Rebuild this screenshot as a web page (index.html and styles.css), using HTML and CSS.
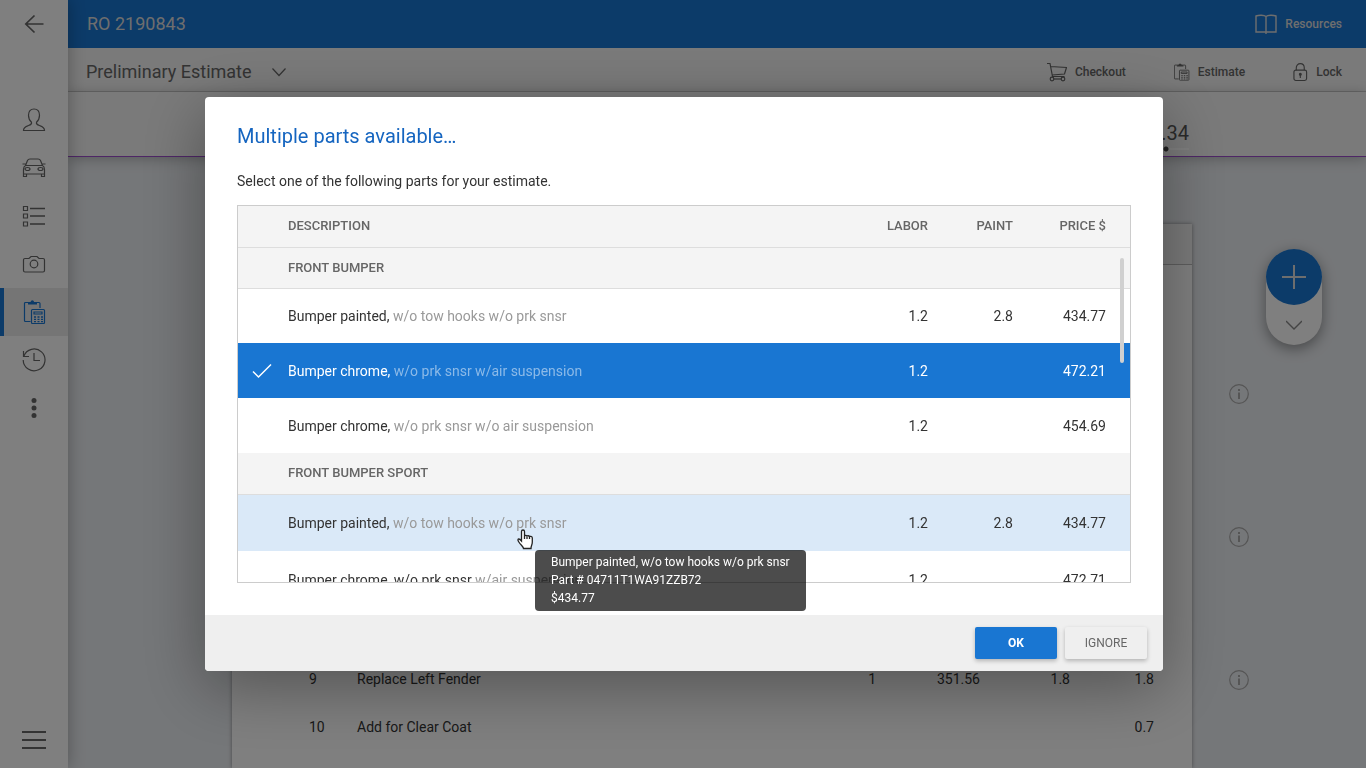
FILE: index.html
```html
<!DOCTYPE html>
<html lang="en">
  <head>
    <meta charset="UTF-8" />
    <meta name="viewport" content="width=device-width, initial-scale=1.0" />
    <title>RO 2190843</title>
    <link rel="stylesheet" href="styles.css">
  </head>
  <body>
    <!-- Shared icons -->
    <svg class="icon-defs" width="0" height="0" aria-hidden="true">
      <symbol id="icon-estimate" viewBox="0 0 24 24">
        <path d="M8.500 21.500H3.500a1 1 0 0 1-1-1V3.500a1 1 0 0 1 1-1H17a1 1 0 0 1 1 1V8" />
        <path d="M6 4.500V3l2.500-.8C8.700 1 9.500.2 10.300.2s1.700.8 1.900 2L15 3v1.500z" fill="currentColor" stroke="none" />
        <rect x="9.500" y="9.500" width="13" height="14" rx="1" />
        <path d="M12 12h8v2h-8z" />
        <path d="M12 17h2m1.500 0h2m1.500 0h2M12 19.300h2m1.500 0h2m1.500 0h2M12 21.600h2m1.500 0h2m1.500 0h2" stroke-width="1.300" />
      </symbol>
      <symbol id="icon-info" viewBox="0 0 20 20">
        <circle cx="10" cy="10" r="9.300" />
        <path d="M10 8.500V15M10 5v2" stroke-width="2" />
      </symbol>
    </svg>

    <div class="app">
      <nav class="sidebar">
        <button class="nav-item nav-back" aria-label="Back">
          <svg class="icon" viewBox="0 0 24 24"><path d="M21.500 12H4M12.500 3.500 3.800 12l8.700 8.500" stroke-width="1.700" /></svg>
        </button>
        <a class="nav-item" href="#" aria-label="Customer">
          <svg class="icon" viewBox="0 0 24 24"><path d="M1.500 22.500c0-3.500 2.500-4 5-5 2.500-.8 3.500-1.500 3-3.200C7.500 12.500 6.500 10 6.500 7.300c0-4 2-6.300 5.500-6.300s5.500 2.300 5.500 6.300c0 2.700-1 5.200-3 7-.5 1.700.5 2.400 3 3.200 2.500 1 5 1.500 5 5z" /></svg>
        </a>
        <a class="nav-item" href="#" aria-label="Vehicle">
          <svg class="icon" viewBox="0 0 24 24">
            <path d="M3.500 9.500 5.500 4.500C6 3.300 7 3 8 3h8c1 0 2 .3 2.500 1.500l2 5M3.500 9.500h17M3.500 9.500c-1.800 1-2 2-2 4V20.500h3V18h15v2.500h3v-7c0-2-.2-3-2-4M1.500 18h21M3.500 8H.5M20.500 8h3" />
            <ellipse cx="5.500" cy="13" rx="2.500" ry="1.500" /><ellipse cx="18.500" cy="13" rx="2.500" ry="1.500" />
          </svg>
        </a>
        <a class="nav-item" href="#" aria-label="List">
          <svg class="icon" viewBox="0 0 24 24"><path d="M1.500 2.500h4v4h-4zM1.500 10h4v4h-4zM1.500 18h4v4h-4z" /><path d="M8 4.500h15M8 12h15M8 20h15" stroke-width="1.700" /></svg>
        </a>
        <a class="nav-item" href="#" aria-label="Photos">
          <svg class="icon" viewBox="0 0 24 24"><path d="M3 6.500h4L9 4.500h6l2 2h4a1.500 1.500 0 0 1 1.500 1.500v10.500a1.500 1.500 0 0 1-1.500 1.500H3a1.500 1.500 0 0 1-1.500-1.500V8A1.500 1.500 0 0 1 3 6.500z" /><circle cx="12" cy="12" r="3.800" /></svg>
        </a>
        <a class="nav-item active" href="#" aria-label="Estimate">
          <svg class="icon"><use href="#icon-estimate" /></svg>
        </a>
        <a class="nav-item" href="#" aria-label="History">
          <svg class="icon" viewBox="0 0 24 24"><path d="M1.500 3v5.500H7M1.800 8.300A10.900 10.900 0 1 1 1.200 12M12 5v7.500h6" /></svg>
        </a>
        <button class="nav-item" aria-label="More">
          <svg class="icon" viewBox="0 0 24 24"><g fill="currentColor" stroke="none"><circle cx="12" cy="4.500" r="2.500" /><circle cx="12" cy="12" r="2.500" /><circle cx="12" cy="19.500" r="2.500" /></g></svg>
        </button>
        <button class="nav-item nav-menu" aria-label="Menu">
          <svg class="icon" viewBox="0 0 24 24"><path d="M0 4h24M0 12h24M0 20h24" stroke-width="1.900" /></svg>
        </button>
      </nav>

      <div class="main">
        <header class="topbar">
          <h1>RO 2190843</h1>
          <a class="tool" href="#">
            <svg class="icon icon-book" viewBox="0 0 22 20"><path d="M11 18.500V2.500C9 1 4 1 1 2v16h20V2C18 1 13 1 11 2.500M11 18v2" stroke-width="1.400" /></svg>
            Resources
          </a>
        </header>

        <div class="toolbar">
          <div class="estimate-picker">
            <select aria-label="Estimate version">
              <option>Preliminary Estimate</option>
            </select>
            <svg class="icon picker-arrow" viewBox="0 0 16 16"><path d="m1.500 4.500 6.500 7 6.500-7" /></svg>
          </div>
          <div class="tools">
            <button class="tool">
              <svg class="icon icon-small" viewBox="0 0 20 20"><path d="M0 1.500h3l2.500 13h12M3.500 4.500l16 1-2 6.500-12.500 1" /><circle cx="5" cy="17" r="1.800" /><circle cx="16" cy="17" r="1.800" /><path d="M7 17h7" /></svg>
              Checkout
            </button>
            <button class="tool">
              <svg class="icon icon-estimate" viewBox="2 0 22 24"><use href="#icon-estimate" width="24" height="24" /></svg>
              Estimate
            </button>
            <button class="tool">
              <svg class="icon icon-lock" viewBox="0 0 16 20"><rect x="1" y="8" width="13.500" height="11" rx="2" /><path d="M3.500 8V5.500C3.500 3 5.200 1 7.800 1S12 3 12 5.500V8M7.800 13v3.500" /><circle cx="7.800" cy="12.500" r="1" fill="currentColor" /></svg>
              Lock
            </button>
          </div>
        </div>

        <div class="summary">
          <div class="total">
            <span>.34</span>
            <div class="total-track"></div>
          </div>
        </div>

        <div class="content">
          <section class="lines-card">
            <div class="lines-header"></div>
            <table class="lines">
              <tr>
                <td class="line-number">9</td>
                <td>Replace Left Fender</td>
                <td class="line-qty">1</td>
                <td class="line-price">351.56</td>
                <td class="line-labor">1.8</td>
                <td class="line-paint">1.8</td>
              </tr>
              <tr>
                <td class="line-number">10</td>
                <td>Add for Clear Coat</td>
                <td class="line-qty"></td>
                <td class="line-price"></td>
                <td class="line-labor"></td>
                <td class="line-paint">0.7</td>
              </tr>
            </table>
          </section>
          <aside class="gutter">
            <div class="info-list">
              <button class="info" aria-label="Info"><svg class="icon"><use href="#icon-info" /></svg></button>
              <button class="info" aria-label="Info"><svg class="icon"><use href="#icon-info" /></svg></button>
              <button class="info" aria-label="Info"><svg class="icon"><use href="#icon-info" /></svg></button>
            </div>
            <div class="fab">
              <button class="fab-add" aria-label="Add"><svg class="icon" viewBox="0 0 24 24"><path d="M12 0v24M0 12h24" stroke-width="2" /></svg></button>
              <button class="fab-more" aria-label="More actions"><svg class="icon" viewBox="0 0 16 16"><path d="m0 4 8 8 8-8" stroke-width="1.400" /></svg></button>
            </div>
          </aside>
        </div>
      </div>
    </div>

    <div class="overlay">
      <div class="dialog" role="dialog" aria-modal="true" aria-labelledby="dialog-title">
        <div class="dialog-body">
          <h2 id="dialog-title">Multiple parts available…</h2>
          <p>Select one of the following parts for your estimate.</p>
          <div class="parts-box">
            <table class="parts">
              <thead>
                <tr>
                  <th class="col-check"></th>
                  <th>DESCRIPTION</th>
                  <th class="col-num">LABOR</th>
                  <th class="col-num">PAINT</th>
                  <th class="col-price">PRICE $</th>
                </tr>
              </thead>
              <tbody>
                <tr class="group">
                  <th></th>
                  <th colspan="4">FRONT BUMPER</th>
                </tr>
                <tr>
                  <td></td>
                  <td>Bumper painted, <span class="detail">w/o tow hooks w/o prk snsr</span></td>
                  <td class="col-num">1.2</td>
                  <td class="col-num">2.8</td>
                  <td class="col-price">434.77</td>
                </tr>
                <tr class="selected" aria-selected="true">
                  <td class="col-check"><svg class="icon" viewBox="0 0 20 16"><path d="m1 8.500 5.500 5.500L19 1.500" stroke-width="1.500" /></svg></td>
                  <td>Bumper chrome, <span class="detail">w/o prk snsr w/air suspension</span></td>
                  <td class="col-num">1.2</td>
                  <td class="col-num"></td>
                  <td class="col-price">472.21</td>
                </tr>
                <tr>
                  <td></td>
                  <td>Bumper chrome, <span class="detail">w/o prk snsr w/o air suspension</span></td>
                  <td class="col-num">1.2</td>
                  <td class="col-num"></td>
                  <td class="col-price">454.69</td>
                </tr>
              </tbody>
              <tbody class="sport">
                <tr class="group">
                  <th></th>
                  <th colspan="4">FRONT BUMPER SPORT</th>
                </tr>
                <tr class="hovered">
                  <td></td>
                  <td>Bumper painted, <span class="detail">w/o tow hooks w/o prk snsr</span></td>
                  <td class="col-num">1.2</td>
                  <td class="col-num">2.8</td>
                  <td class="col-price">434.77</td>
                </tr>
                <tr>
                  <td></td>
                  <td>Bumper chrome, w/o prk snsr <span class="detail">w/air suspension</span></td>
                  <td class="col-num">1.2</td>
                  <td class="col-num"></td>
                  <td class="col-price">472.71</td>
                </tr>
              </tbody>
            </table>
            <div class="scroll-thumb"></div>
          </div>
        </div>
        <div class="dialog-footer">
          <button class="btn btn-primary">OK</button>
          <button class="btn">IGNORE</button>
        </div>
        <svg class="pointer" viewBox="0 0 18 21"><path d="M5.500 12V2.500a1.500 1.500 0 0 1 3 0V7c0-1 2.500-1 2.500.5 0-1.200 2.500-1 2.500.5 0-1 2.800-.8 2.800 1v4c0 3-1.300 3.500-1.300 6.500H7.500c0-2-3-3.500-5-7-1-1.800-.5-2.500.3-2.500 1 0 1.700.8 2.700 2z" /><path d="M8.500 7v3M11 7.500V10M13.500 8v2" /></svg>
        <div class="tooltip" role="tooltip">
          Bumper painted, w/o tow hooks w/o prk snsr<br />
          Part # 04711T1WA91ZZB72<br />
          $434.77
        </div>
      </div>
    </div>
  </body>
</html>
```

FILE: styles.css
```css
* {
  box-sizing: border-box;
}
body {
  margin: 0;
  font-family: Roboto, "Liberation Sans", sans-serif;
  font-size: 14px;
  line-height: 20px;
  color: #333;
}
h1,
h2,
p {
  margin: 0;
  font-weight: 400;
}
button {
  border: none;
  padding: 0;
  background: none;
  font: inherit;
  color: inherit;
  cursor: pointer;
}
a {
  color: inherit;
  text-decoration: none;
}
table {
  width: 100%;
  border-collapse: collapse;
  table-layout: fixed;
}
.icon-defs {
  position: absolute;
}
.icon {
  display: block;
  width: 24px;
  height: 24px;
  fill: none;
  stroke: currentColor;
  stroke-width: 1.2;
}

/* App shell */
.app {
  display: flex;
  height: 100vh;
  overflow: hidden;
}
.sidebar {
  display: flex;
  flex-direction: column;
  width: 68px;
  background: white;
  color: #666;
  box-shadow: 0 0 16px rgba(0, 0, 0, 0.3);
  z-index: 1;
}
.nav-item {
  display: flex;
  align-items: center;
  justify-content: center;
  height: 48px;
  border-left: 4px solid transparent;
  border-right: 4px solid transparent;
}
.nav-back {
  margin-bottom: 48px;
}
.nav-item.active {
  border-left-color: #1976d2;
  border-right-color: #ebebeb;
  background: #ebebeb;
  color: #1976d2;
}
.nav-item.nav-menu {
  margin-top: auto;
  height: 56px;
  border-width: 1px 0 0;
  border-top-color: #bbb;
}
.main {
  display: flex;
  flex-direction: column;
  flex: 1;
  min-width: 0;
}
.topbar {
  display: flex;
  align-items: center;
  justify-content: space-between;
  height: 48px;
  padding: 0 24px 0 19px;
  background: #1976d2;
  color: #ddd;
}
.topbar h1 {
  font-size: 18px;
  line-height: 24px;
}
.toolbar {
  display: flex;
  align-items: center;
  justify-content: space-between;
  height: 44px;
  padding: 5px 24px 0 18px;
  border-bottom: 1px solid #ccc;
  background: #f4f4f4;
  color: #666;
}
.estimate-picker {
  display: flex;
  align-items: center;
}
.estimate-picker select {
  appearance: none;
  width: 185px;
  padding: 0;
  border: none;
  background: none;
  font: inherit;
  font-size: 18px;
  line-height: 24px;
  color: inherit;
}
.picker-arrow {
  width: 16px;
  height: 16px;
}
.tools {
  display: flex;
  gap: 48px;
}
.tool {
  display: flex;
  align-items: center;
  gap: 8px;
  font-size: 12px;
  font-weight: 500;
}
.icon-small {
  width: 20px;
  height: 20px;
}
.icon-book {
  width: 22px;
  height: 20px;
}
.icon-estimate {
  width: 16px;
  height: 18px;
}
.icon-lock {
  width: 15px;
  height: 20px;
}
.summary {
  display: flex;
  justify-content: flex-end;
  height: 65px;
  padding: 29px 177px 0 0;
  border-bottom: 1px solid #9c4dcc;
  background: #f4f4f4;
  box-shadow: 0 2px 12px rgba(0, 0, 0, 0.25);
  color: #555;
  z-index: 0;
}
.total {
  width: 32px;
  font-size: 20px;
  line-height: 24px;
  text-align: right;
}
.total-track {
  height: 6px;
  margin-top: 1px;
  background: radial-gradient(circle at 9px 3px, #444 2px, transparent 3px),
    linear-gradient(transparent 2px, #fff 2px, #fff 4px, transparent 4px);
}

/* Estimate lines */
.content {
  display: flex;
  flex: 1;
  min-height: 0;
  padding-left: 164px;
  background: #ebeef2;
}
.lines-card {
  display: flex;
  flex-direction: column;
  flex: 1;
  margin-top: 67px;
  padding-bottom: 17px;
  background: white;
  box-shadow: 0 0 4px rgba(0, 0, 0, 0.4);
}
.lines-header {
  height: 41px;
  border-bottom: 1px solid #bbb;
  background: #f4f4f4;
}
.lines {
  margin-top: auto;
}
.lines td {
  height: 48px;
  padding: 0;
}
.lines .line-number {
  width: 125px;
  padding-left: 77px;
}
.lines .line-qty,
.lines .line-price,
.lines .line-labor,
.lines .line-paint {
  width: 90px;
  text-align: right;
}
.lines .line-price {
  width: 104px;
}
.lines .line-paint {
  width: 122px;
  padding-right: 38px;
}
.gutter {
  display: flex;
  align-items: flex-start;
  gap: 17px;
  width: 174px;
  padding-left: 37px;
}
.info-list {
  display: flex;
  flex-direction: column;
  gap: 123px;
  padding-top: 227px;
  color: #aaa;
}
.info .icon {
  width: 20px;
  height: 20px;
}
.fab {
  width: 56px;
  margin-top: 92px;
  border-radius: 28px;
  background: white;
  box-shadow: 0 4px 14px rgba(0, 0, 0, 0.4);
  color: #888;
}
.fab-add,
.fab-more {
  display: flex;
  align-items: center;
  justify-content: center;
  width: 56px;
  height: 40px;
}
.fab-add {
  height: 56px;
  border-radius: 50%;
  background: #1976d2;
  color: #ddd;
}
.fab-more .icon {
  width: 16px;
  height: 16px;
}

/* Parts dialog */
.overlay {
  position: fixed;
  inset: 0;
  display: flex;
  align-items: center;
  padding: 0 203px 0 205px;
  background: rgba(0, 0, 0, 0.5);
  z-index: 10;
}
.dialog {
  position: relative;
  flex: 1;
  border-radius: 4px;
  background: white;
  box-shadow: 0 16px 64px rgba(0, 0, 0, 0.35);
}
.dialog-body {
  padding: 27px 32px 32px;
}
.dialog h2 {
  margin-bottom: 23px;
  font-size: 20px;
  line-height: 24px;
  color: #1565c0;
}
.dialog p {
  margin-bottom: 14px;
}
.parts-box {
  position: relative;
  height: 378px;
  border: 1px solid #ccc;
  overflow: hidden;
}
.parts th {
  height: 41px;
  padding: 0;
  border-bottom: 1px solid #ddd;
  background: #f4f4f4;
  font-size: 13px;
  font-weight: 500;
  text-align: left;
  color: #666;
}
.parts td {
  height: 55px;
  padding: 0;
}
.parts .sport td {
  height: 57px;
}
.parts .col-check {
  width: 50px;
}
.parts .col-check .icon {
  width: 20px;
  height: 16px;
  margin-left: 14px;
}
.parts .col-num {
  width: 85px;
  text-align: right;
}
.parts .col-price {
  width: 117px;
  padding-right: 24px;
  text-align: right;
}
.detail {
  color: #999;
}
.selected {
  background: #1976d2;
  color: white;
}
.selected .detail {
  color: #8cbae8;
}
.hovered {
  background: #dae9f8;
}
.scroll-thumb {
  position: absolute;
  top: 52px;
  right: 6px;
  width: 4px;
  height: 105px;
  border-radius: 2px;
  background: #d0d0d0;
}
.dialog-footer {
  display: flex;
  justify-content: flex-end;
  gap: 8px;
  padding: 12px 16px;
  border-radius: 0 0 4px 4px;
  background: #efefef;
}
.btn {
  width: 82px;
  height: 32px;
  border-radius: 2px;
  background: #efefef;
  box-shadow: 0 2px 4px rgba(0, 0, 0, 0.25);
  font-size: 12px;
  color: #666;
}
.btn-primary {
  background: #1976d2;
  font-weight: 700;
  color: white;
}
.pointer {
  position: absolute;
  top: 432px;
  left: 311px;
  width: 18px;
  height: 21px;
  fill: white;
  stroke: #222;
  stroke-width: 1.3;
}
.tooltip {
  position: absolute;
  top: 453px;
  left: 330px;
  padding: 3px 16px 4px;
  border-radius: 4px;
  background: rgba(0, 0, 0, 0.7);
  font-size: 12px;
  line-height: 18px;
  white-space: nowrap;
  color: white;
}
```
